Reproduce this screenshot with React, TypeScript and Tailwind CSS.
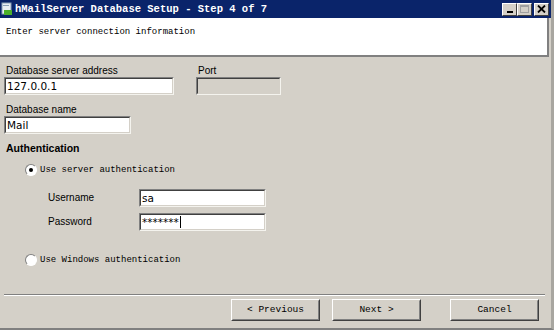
const mono = "font-['Liberation_Mono','DejaVu_Sans_Mono',monospace]";
const sans = "font-['Liberation_Sans','DejaVu_Sans',sans-serif]";
const boxFont = "font-['DejaVu_Sans','Liberation_Sans',sans-serif]";

function TextBox({ value, className = "", disabled = false, caret = false }: { value?: string; className?: string; disabled?: boolean; caret?: boolean }) {
  return (
    <div
      className={`h-[18px] border border-t-[#808080] border-l-[#808080] border-r-[#f4f3ee] border-b-[#f4f3ee] ${disabled ? "bg-[#d4d0c8]" : "bg-white"} ${className}`}
    >
      <div className="h-full border border-t-[#404040] border-l-[#404040] border-r-[#d4d0c8] border-b-[#d4d0c8] flex items-center pl-[1px]">
        <span className={`${boxFont} text-[10.5px] text-black leading-none`}>{value}</span>
        {caret && <span className="w-px h-[12px] bg-black ml-px" />}
      </div>
    </div>
  );
}

function Radio({ checked, label }: { checked?: boolean; label: string }) {
  return (
    <div className="flex items-center gap-[3px] h-[12px]">
      <div className="w-[12px] h-[12px] rounded-full bg-white border border-t-[#808080] border-l-[#808080] border-r-white border-b-white flex items-center justify-center">
        {checked && <div className="w-[4px] h-[4px] rounded-full bg-black" />}
      </div>
      <span className={`${mono} text-[9px] text-black leading-none`}>{label}</span>
    </div>
  );
}

function Button({ label }: { label: string }) {
  return (
    <div className="w-[89px] h-[22px] bg-[#d4d0c8] border border-t-white border-l-white border-r-[#404040] border-b-[#404040]">
      <div className="h-full border border-transparent border-r-[#808080] border-b-[#808080] flex items-center justify-center">
        <span className={`${mono} text-[9.5px] text-black leading-none`}>{label}</span>
      </div>
    </div>
  );
}

function TitleButton({ children }: { children: React.ReactNode }) {
  return (
    <div className="w-[15px] h-[13px] bg-[#d4d0c8] border border-t-white border-l-white border-r-[#404040] border-b-[#404040] flex items-center justify-center">
      {children}
    </div>
  );
}

export default function App() {
  return (
    <div className="w-[554px] h-[330px] bg-[#d4d0c8] flex flex-col overflow-hidden border-r-[3px] border-r-[#a8a6a0] border-b-[2px] border-b-[#808080]">
      {/* title bar */}
      <div className="h-[18px] bg-[#0a246a] flex items-center pl-[1px] pr-[2px] shrink-0">
        <svg width="13" height="14" viewBox="0 0 13 14">
          <rect x="1" y="1" width="9" height="11" fill="#e8eef4" stroke="#8aa0b8" />
          <rect x="3" y="8" width="8" height="5" fill="#4caf2a" />
          <rect x="2" y="3" width="6" height="1" fill="#8aa0b8" />
        </svg>
        <span className={`${mono} text-[10.5px] font-bold text-white leading-none ml-[1px]`}>hMailServer Database Setup - Step 4 of 7</span>
        <div className="ml-auto flex items-center">
          <TitleButton>
            <div className="w-[6px] h-[2px] bg-black mt-[6px]" />
          </TitleButton>
          <TitleButton>
            <div className="w-[9px] h-[8px] border border-[#a0a0a0] border-t-2" />
          </TitleButton>
          <div className="w-[2px]" />
          <TitleButton>
            <svg width="9" height="8" viewBox="0 0 9 8">
              <path d="M1 0.5 L8 7.5 M8 0.5 L1 7.5" stroke="black" strokeWidth="1.8" />
            </svg>
          </TitleButton>
        </div>
      </div>

      {/* header */}
      <div className="h-[39px] bg-white shrink-0 border-b-2 border-b-[#808080] border-r-2 border-r-[#808080] mr-[2px] px-[6px] pt-[8px]">
        <div className={`${mono} text-[9px] text-black leading-[12px]`}>Enter server connection information</div>
      </div>

      {/* body */}
      <div className="flex-1 flex flex-col px-[4px] pt-[8px]">
        <div className="flex gap-[22px]">
          <div className="flex flex-col">
            <span className={`${sans} text-[10px] text-black leading-[12px] pl-[2px]`}>Database server address</span>
            <TextBox value="127.0.0.1" className="w-[170px]" />
          </div>
          <div className="flex flex-col">
            <span className={`${sans} text-[10px] text-black leading-[12px] pl-[2px]`}>Port</span>
            <TextBox disabled className="w-[85px]" />
          </div>
        </div>

        <div className="flex flex-col mt-[9px]">
          <span className={`${sans} text-[10px] text-black leading-[12px] pl-[2px]`}>Database name</span>
          <TextBox value="Mail" className="w-[127px]" />
        </div>

        <div className={`${sans} text-[10.5px] font-bold text-black leading-[12px] pl-[2px] mt-[8px]`}>Authentication</div>

        <div className="pl-[21px] mt-[10px]">
          <Radio checked label="Use server authentication" />
        </div>

        <div className="pl-[44px] mt-[13px] flex flex-col gap-[6px]">
          <div className="flex items-center">
            <span className={`${sans} text-[10px] text-black w-[91px] leading-[12px]`}>Username</span>
            <TextBox value="sa" className="w-[127px]" />
          </div>
          <div className="flex items-center">
            <span className={`${sans} text-[10px] text-black w-[91px] leading-[12px]`}>Password</span>
            <TextBox value="*******" caret className="w-[127px]" />
          </div>
        </div>

        <div className="pl-[21px] mt-[23px]">
          <Radio label="Use Windows authentication" />
        </div>

        <div className="mt-[28px] mr-[2px] border-t border-t-[#808080] border-b border-b-white" />

        <div className="flex justify-end mt-[3px] pr-[8px]">
          <Button label="< Previous" />
          <div className="w-[12px]" />
          <Button label="Next >" />
          <div className="w-[29px]" />
          <Button label="Cancel" />
        </div>
      </div>
    </div>
  );
}
